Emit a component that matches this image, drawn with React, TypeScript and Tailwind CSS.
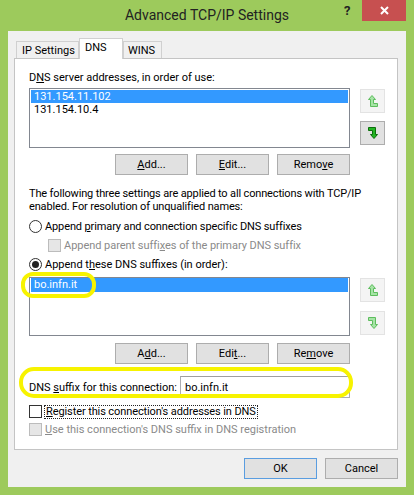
import React from "react";

function UpArrow({ on }: { on: boolean }) {
  return (
    <svg width="10" height="12" viewBox="0 0 10 12">
      <path
        d="M4 0.5 L7.5 4.5 L5.5 4.5 L5.5 8.5 L9.5 8.5 L9.5 11.5 L2.5 11.5 L2.5 4.5 L0.5 4.5 Z"
        fill={on ? "#22b522" : "#a6e4a6"}
        stroke={on ? "#0b6e0b" : "#5dbd5d"}
        strokeWidth="1"
      />
    </svg>
  );
}

function DownArrow({ on }: { on: boolean }) {
  return (
    <svg width="10" height="12" viewBox="0 0 10 12" style={{ transform: "rotate(180deg)" }}>
      <path
        d="M4 0.5 L7.5 4.5 L5.5 4.5 L5.5 8.5 L9.5 8.5 L9.5 11.5 L2.5 11.5 L2.5 4.5 L0.5 4.5 Z"
        fill={on ? "#22b522" : "#a6e4a6"}
        stroke={on ? "#0b6e0b" : "#5dbd5d"}
        strokeWidth="1"
      />
    </svg>
  );
}

function SideBtn({ on, children }: { on: boolean; children: React.ReactNode }) {
  return (
    <div
      className={
        on
          ? "w-[25px] h-[24px] border border-[#adadad] bg-[#e1e1e1] flex items-center justify-center"
          : "w-[25px] h-[24px] border border-[#e3e3e3] bg-[#f4f4f4] flex items-center justify-center"
      }
    >
      {children}
    </div>
  );
}

function Btn({ children, def }: { children: React.ReactNode; def?: boolean }) {
  return (
    <div
      className={
        "w-[73px] h-[21px] border flex items-center justify-center leading-[13px] whitespace-nowrap bg-[#e1e1e1] " +
        (def ? "border-[#5a9de0]" : "border-[#adadad]")
      }
    >
      {children}
    </div>
  );
}

function Radio({ checked }: { checked?: boolean }) {
  return (
    <div className="w-[13px] h-[13px] rounded-full border border-[#333] bg-white flex items-center justify-center shrink-0">
      {checked && <div className="w-[7px] h-[7px] rounded-full bg-[#222]" />}
    </div>
  );
}

function Check({ disabled }: { disabled?: boolean }) {
  return (
    <div
      className={
        disabled
          ? "w-[13px] h-[13px] border border-[#bcbcbc] bg-[#e6e6e6] shrink-0"
          : "w-[13px] h-[13px] border border-[#333] bg-white shrink-0"
      }
    />
  );
}

export default function App() {
  return (
    <div className="relative w-[414px] h-[495px] bg-[#9dca5c] flex flex-col font-['Roboto',sans-serif] text-[11px] text-black overflow-hidden whitespace-nowrap">
      {/* title bar */}
      <div className="relative h-[31px] flex items-center justify-center shrink-0">
        <span className="text-[14px] text-[#222] leading-[20px] -mt-[1px]">Advanced TCP/IP Settings</span>
        <span className="absolute left-[344px] top-[3px] text-[13px] font-bold text-[#222] leading-[16px]">?</span>
        <div className="absolute right-[8px] top-0 w-[44px] h-[21px] bg-[#c75050] flex items-center justify-center">
          <svg width="9" height="9" viewBox="0 0 9 9">
            <path d="M1 1 L8 8 M8 1 L1 8" stroke="#fff" strokeWidth="2" />
          </svg>
        </div>
      </div>

      {/* client */}
      <div className="mx-[8px] h-[456px] bg-[#f0f0f0] flex flex-col pl-[6px] pr-[8px] shrink-0">
        {/* tabs */}
        <div className="flex items-end h-[20px] mt-[7px] pl-[2px]">
          <div className="w-[63px] h-[17px] border border-b-0 border-[#d0d0d0] bg-[#f0f0f0] flex items-center pl-[5px] leading-[13px]">
            IP Settings
          </div>
          <div className="relative z-10 w-[44px] h-[21px] -mb-[1px] border border-b-0 border-[#d0d0d0] bg-white flex items-start pt-[2px] pl-[5px] leading-[13px]">
            DNS
          </div>
          <div className="w-[39px] h-[17px] border border-b-0 border-[#d0d0d0] bg-[#f0f0f0] flex items-center pl-[4px] leading-[13px]">
            WINS
          </div>
        </div>

        {/* panel */}
        <div className="w-[384px] h-[392px] border border-[#c4c4c4] bg-white flex flex-col pl-[14px]">
          <div className="mt-[11px] leading-[15px] h-[15px]">
            D<u>N</u>S server addresses, in order of use:
          </div>
          <div className="mt-[3px] flex">
            <div className="w-[321px] h-[60px] border border-[#828790] bg-white p-[1px]">
              <div className="h-[13px] leading-[13px] pl-[3px] bg-[#3399ff] text-white">131.154.11.102</div>
              <div className="h-[13px] leading-[13px] pl-[3px]">131.154.10.4</div>
            </div>
            <div className="ml-[10px] pt-[1px] flex flex-col gap-[8px]">
              <SideBtn on={false}>
                <UpArrow on={false} />
              </SideBtn>
              <SideBtn on={true}>
                <DownArrow on={true} />
              </SideBtn>
            </div>
          </div>
          <div className="mt-[6px] w-[321px] flex justify-end gap-[8px]">
            <Btn>
              <span><u>A</u>dd...</span>
            </Btn>
            <Btn>
              <span><u>E</u>dit...</span>
            </Btn>
            <Btn>
              <span>Remo<u>v</u>e</span>
            </Btn>
          </div>

          <div className="mt-[12px] leading-[13px] tracking-[-0.15px]">
            The following three settings are applied to all connections with TCP/IP
            <br />
            enabled. For resolution of unqualified names:
          </div>
          <div className="mt-[6px] h-[15px] flex items-center gap-[3px]">
            <Radio />
            <span className="leading-[15px] tracking-[-0.12px]">
              Append <u>p</u>rimary and connection specific DNS suffixes
            </span>
          </div>
          <div className="mt-[4px] h-[15px] flex items-center gap-[3px] pl-[19px]">
            <Check disabled />
            <span className="leading-[15px] text-[#8a8a8a] tracking-[-0.04px]">
              Append parent suffi<u>x</u>es of the primary DNS suffix
            </span>
          </div>
          <div className="mt-[4px] h-[15px] flex items-center gap-[3px]">
            <Radio checked />
            <span className="leading-[15px]">
              Append t<u>h</u>ese DNS suffixes (in order):
            </span>
          </div>
          <div className="mt-[5px] flex">
            <div className="w-[321px] h-[59px] border border-[#828790] bg-white p-[1px] pt-0">
              <div className="h-[14px] leading-[14px] pl-[3px] bg-[#3399ff] text-white">bo.infn.it</div>
            </div>
            <div className="ml-[10px] pt-[1px] flex flex-col gap-[9px]">
              <SideBtn on={false}>
                <UpArrow on={false} />
              </SideBtn>
              <SideBtn on={false}>
                <DownArrow on={false} />
              </SideBtn>
            </div>
          </div>
          <div className="mt-[7px] w-[321px] flex justify-end gap-[8px]">
            <Btn>
              <span>A<u>d</u>d...</span>
            </Btn>
            <Btn>
              <span>Edi<u>t</u>...</span>
            </Btn>
            <Btn>
              <span>Re<u>m</u>ove</span>
            </Btn>
          </div>

          <div className="mt-[12px] w-[321px] flex items-center">
            <span className="w-[151px] leading-[15px]">
              DNS <u>s</u>uffix for this connection:
            </span>
            <div className="w-[170px] h-[22px] border border-[#abadb3] border-t-[#a0a0a0] bg-white pl-[4px] flex items-center leading-[15px]">
              bo.infn.it
            </div>
          </div>
          <div className="mt-[6px] h-[15px] flex items-center gap-[2px]">
            <Check />
            <span className="border border-dotted border-[#222] leading-[12px] px-[1px] tracking-[-0.1px]">
              <u>R</u>egister this connection's addresses in DNS
            </span>
          </div>
          <div className="mt-[3px] h-[15px] flex items-center gap-[3px]">
            <Check disabled />
            <span className="leading-[15px] text-[#8a8a8a]">
              <u>U</u>se this connection's DNS suffix in DNS registration
            </span>
          </div>
        </div>

        {/* bottom buttons */}
        <div className="mt-[8px] flex justify-end gap-[8px]">
          <Btn def>OK</Btn>
          <Btn>Cancel</Btn>
        </div>
      </div>

      {/* annotation highlights */}
      <div className="absolute left-[21px] top-[272px] w-[75px] h-[26px] border-[4px] border-[#f7f300] rounded-[12px]" />
      <div className="absolute left-[19px] top-[367px] w-[334px] h-[31px] border-[4px] border-[#f7f300] rounded-[15px]" />
    </div>
  );
}
